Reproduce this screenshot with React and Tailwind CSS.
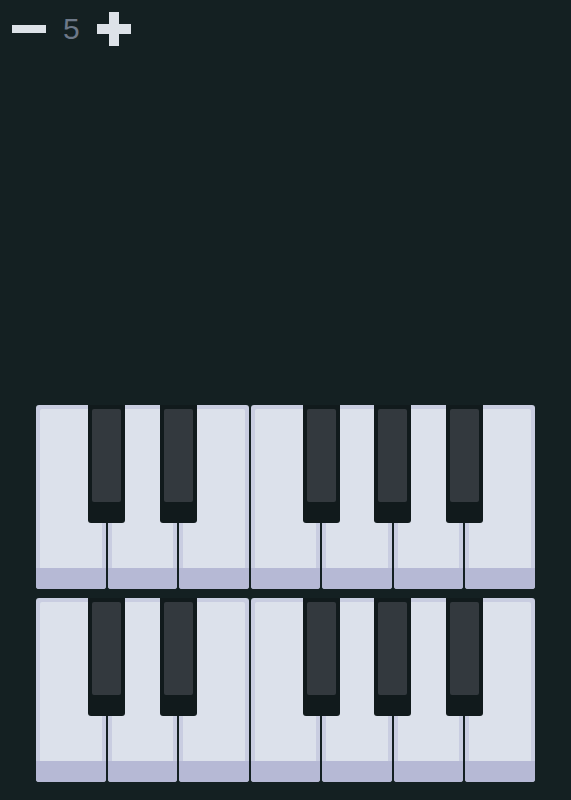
import React from "react";

const blackPos = [
  "left-[calc((100%-12px)/7*1+1px-18.5px)]",
  "left-[calc((100%-12px)/7*2+3px-18.5px)]",
  "left-[calc((100%-12px)/7*4+7px-18.5px)]",
  "left-[calc((100%-12px)/7*5+9px-18.5px)]",
  "left-[calc((100%-12px)/7*6+11px-18.5px)]",
];

function WhiteKey() {
  return (
    <div className="flex flex-col rounded-[3px] overflow-hidden bg-[#c9cde1]">
      <div className="flex-1 px-[4px] pt-[4px]">
        <div className="h-full rounded-t-[2px] bg-[#dce1eb]" />
      </div>
      <div className="h-[21px] bg-[#b6b9d5]" />
    </div>
  );
}

function BlackKey({ pos }) {
  return (
    <div className={`absolute top-0 ${pos} w-[37px] h-[118px] rounded-b-[3px] bg-[#111a1c] px-[4px] pt-[4px]`}>
      <div className="h-[93px] rounded-[2px] bg-[#33393e]" />
    </div>
  );
}

function Row() {
  return (
    <div className="relative h-[184px]">
      <div className="grid grid-cols-7 gap-[2px] h-full">
        {Array.from({ length: 7 }).map((_, i) => (
          <WhiteKey key={i} />
        ))}
      </div>
      {blackPos.map((p, i) => (
        <BlackKey key={i} pos={p} />
      ))}
    </div>
  );
}

export default function App() {
  return (
    <div className="w-full h-[800px] bg-[#142022] flex flex-col overflow-hidden">
      <div className="flex items-center h-[57px] pl-[12px]">
        <div className="w-[34px] h-[8px] bg-[#dde2e8]" />
        <div
          className="ml-[17px] w-[17px] text-[30px] leading-none text-[#6d7888]"
          style={{ fontFamily: '"Liberation Sans", Arial, sans-serif' }}
        >
          5
        </div>
        <div className="relative ml-[17px] w-[34px] h-[34px]">
          <div className="absolute left-0 top-[12px] w-[34px] h-[10px] bg-[#dde2e8]" />
          <div className="absolute top-0 left-[12px] w-[10px] h-[34px] bg-[#dde2e8]" />
        </div>
      </div>
      <div className="flex-1" />
      <div className="px-9 pb-[18px] flex flex-col gap-[9px]">
        <Row />
        <Row />
      </div>
    </div>
  );
}
